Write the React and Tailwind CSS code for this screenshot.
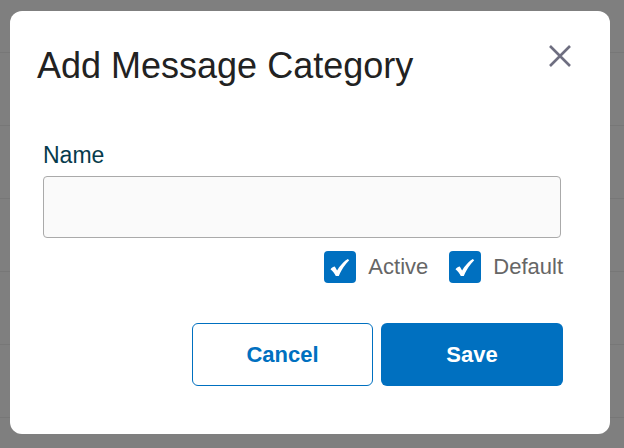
import { useState } from 'react';

const rows = [0, 1, 2, 3, 4, 5];

const CheckBox = ({ checked, onChange, label }) => (
  <label className="flex items-center gap-3 cursor-pointer select-none">
    <span
      onClick={onChange}
      className={`flex items-center justify-center w-8 h-8 rounded-[4px] ${checked ? 'bg-[#0070c0]' : 'bg-white border border-[#999]'}`}
    >
      {checked && (
        <svg width="32" height="32" viewBox="0 0 32 32">
          <path
            d="M6.5 18.2 C8 16.6 9.4 15.8 10.8 15.6 L13.1 19.4 C16 14.6 19.6 10.6 23.8 8 L25.2 9.2 C20.8 13.6 17.4 19 14.8 25 L11.8 25 C10.4 22 8.8 20 6.5 18.2 Z"
            fill="#fff"
          />
        </svg>
      )}
    </span>
    <span className="text-[22px] leading-[28px] text-[#666]">{label}</span>
  </label>
);

const App = () => {
  const [name, setName] = useState('');
  const [active, setActive] = useState(true);
  const [isDefault, setIsDefault] = useState(true);

  return (
    <div className="h-screen bg-[#7f7f7f] overflow-hidden" style={{ fontFamily: '"Liberation Sans", Arial, sans-serif' }}>
      {/* Table behind the overlay */}
      <div className="h-[53px] border-b border-[#777]" />
      {rows.map((r) => (
        <div key={r} className="h-[73px] border-b border-[#777]" />
      ))}

      {/* Dialog */}
      <div className="fixed left-[10px] top-[11px] w-[600px] h-[423px] bg-white rounded-[12px] pl-[33px] pr-[47px] pt-[35px]">
        <div className="flex items-start justify-between">
          <h2 className="text-[36px] leading-[40px] text-[#222] -ml-[6px]">Add Message Category</h2>
          <button className="mt-[-4px] mr-[-11px] w-[28px] h-[28px] flex items-center justify-center">
            <svg width="24" height="24" viewBox="0 0 24 24">
              <path d="M2 2 L22 22 M22 2 L2 22" stroke="#6e6e80" strokeWidth="2.6" />
            </svg>
          </button>
        </div>

        <label className="block mt-[55px] text-[23px] leading-[28px] text-[#063b4c]">Name</label>
        <input
          value={name}
          onChange={(e) => setName(e.target.value)}
          className="mt-[7px] mr-[2px] block w-[518px] h-[62px] rounded-[4px] border border-[#aaa] bg-[#fafafa] px-3 text-[20px] outline-none"
        />

        <div className="flex justify-end gap-[21px] mt-[13px]">
          <CheckBox checked={active} onChange={() => setActive(!active)} label="Active" />
          <CheckBox checked={isDefault} onChange={() => setIsDefault(!isDefault)} label="Default" />
        </div>

        <div className="flex justify-end gap-2 mt-[40px]">
          <button className="w-[181px] h-[63px] rounded-[6px] border border-[#0070c0] bg-white text-[#0070c0] text-[22px] font-bold">
            Cancel
          </button>
          <button className="w-[182px] h-[63px] rounded-[6px] bg-[#0070c0] text-white text-[22px] font-bold">
            Save
          </button>
        </div>
      </div>
    </div>
  );
};

export default App;
